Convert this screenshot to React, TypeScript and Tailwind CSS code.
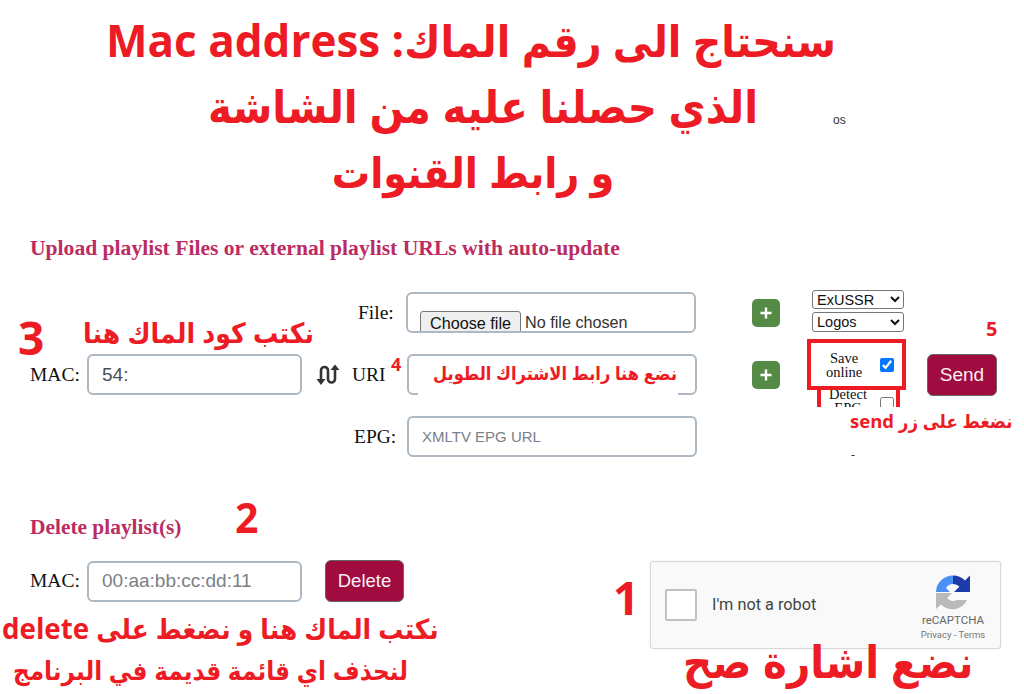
const arabic = { fontFamily: '"Open Sans", "DejaVu Sans Condensed", sans-serif' };

function SwapIcon() {
  return (
    <svg width="24" height="22" viewBox="0 0 24 22" className="shrink-0">
      <path d="M5 16V6.5a3.5 3.5 0 0 1 7 0V15a3.5 3.5 0 0 0 7 0V5" fill="none" stroke="#333" strokeWidth="2.6" />
      <path d="M0.5 15h9L5 21zM14.500 6h9L19 0.500z" fill="#333" />
    </svg>
  );
}

function PlusButton() {
  return (
    <button className="flex h-[28px] w-[28px] items-center justify-center rounded-[5px] bg-[#558b47]">
      <svg width="14" height="14" viewBox="0 0 14 14">
        <path d="M7 1.500v11M1.500 7h11" stroke="#fff" strokeWidth="2.400" />
      </svg>
    </button>
  );
}

function RecaptchaLogo() {
  return (
    <svg width="36" height="36" viewBox="0 0 36 36">
      <path d="M1 17A17 17 0 0 1 18 0.500V9A9 9 0 0 0 11 13L15 17Z" fill="#4a90f2" />
      <path d="M18 0.500A17 17 0 0 1 30 5.500L35 0.500V17H19L24.500 11.500A9 9 0 0 0 18 9Z" fill="#1c3aa9" />
      <path d="M1 18H17L12 23A8 8 0 0 0 22 25H32A16 16 0 0 1 6 29.500L1 34Z" fill="#b9b9b9" />
    </svg>
  );
}

function Note({ className, children }: { className: string; children: React.ReactNode }) {
  return (
    <div dir="rtl" style={arabic} className={`absolute font-bold whitespace-nowrap text-[#ed1c24] ${className}`}>
      {children}
    </div>
  );
}

export default function App() {
  const inputClass =
    "h-[41px] rounded-[6px] border-2 border-[#adb8c2] bg-white px-[13px] font-['Liberation_Sans',sans-serif] text-[#495057] placeholder:text-[#7a8087] outline-none";

  return (
    <div className="relative h-[694px] w-[1024px] overflow-hidden bg-white font-['Liberation_Serif',serif] text-[19.500px] text-[#111]">
      <div dir="rtl" style={arabic} className="w-[942px] pt-[7px] text-center text-[44px] leading-[66px] font-bold text-[#ed1c24]">
        <div>سنحتاج الى رقم الماك: Mac address</div>
        <div className="pl-[24px] text-[45px]">الذي حصلنا عليه من الشاشة</div>
        <div className="pl-[4px] text-[42.500px]">و رابط القنوات</div>
      </div>

      <h2 className="mt-[31px] pl-[30px] text-[21.600px] leading-[24px] font-bold text-[#bc2c62]">
        Upload playlist Files or external playlist URLs with auto-update
      </h2>

      <form className="mt-[32px] flex h-[168px] items-start pl-[30px]">
        <div className="mt-[62px] flex items-center">
          <label className="w-[57px]">MAC:</label>
          <input className={`${inputClass} w-[215px] text-[19px]`} defaultValue="54:" />
          <span className="ml-[14px]">
            <SwapIcon />
          </span>
        </div>

        <div className="ml-[11px] flex flex-col gap-[21px]">
          <div className="flex items-center">
            <label className="ml-[7px] w-[48px]">File:</label>
            <div className="flex h-[41px] w-[290px] items-start overflow-hidden rounded-[6px] border-2 border-[#adb8c2] bg-white pt-[17px] pl-[12px] font-['Liberation_Sans',sans-serif] text-[16.200px] leading-[22px] text-[#333]">
              <span className="rounded-[3px] border border-[#767676] bg-[#efefef] px-[9px] whitespace-nowrap text-[#111]">Choose file</span>
              <span className="ml-[4px] whitespace-nowrap">No file chosen</span>
            </div>
          </div>
          <div className="flex items-center">
            <label className="w-[56px] pl-[1px]">URI</label>
            <input className={`${inputClass} w-[290px] text-[15px]`} />
          </div>
          <div className="flex items-center">
            <label className="w-[56px] pl-[3px]">EPG:</label>
            <input className={`${inputClass} w-[290px] text-[15px]`} placeholder="XMLTV EPG URL" />
          </div>
        </div>

        <div className="mt-[7px] ml-[55px] flex flex-col gap-[34px]">
          <PlusButton />
          <PlusButton />
        </div>

        <div className="-mt-[2px] ml-[27px] flex flex-col">
          <div className="ml-[5px] flex w-[92px] flex-col gap-[3px] font-['Liberation_Sans',sans-serif] text-[14.500px]">
            <select className="h-[19px] rounded-[3px] border border-[#767676] bg-white leading-[17px]">
              <option>ExUSSR</option>
            </select>
            <select className="h-[20px] rounded-[3px] border border-[#767676] bg-white leading-[18px]">
              <option>Logos</option>
            </select>
          </div>
          <label className="relative z-10 mt-[7px] flex h-[51px] w-[99px] items-center border-[4px] border-[#ed1c24] bg-white pl-[9px] text-[14.500px] leading-[14px]">
            <span className="w-[48px] text-center">
              Save
              <br />
              online
            </span>
            <input type="checkbox" defaultChecked className="ml-[12px] h-[14px] w-[14px]" />
          </label>
          <label className="-mt-[5px] ml-[10px] flex h-[22px] w-[83px] items-start overflow-hidden border-x-[4px] border-[#ed1c24] bg-white pl-[3px] text-[14.500px] leading-[14px]">
            <span className="mt-[2px] w-[48px] text-center">
              Detect
              <br />
              EPG
            </span>
            <input type="checkbox" className="mt-[12px] ml-[8px] h-[14px] w-[14px]" />
          </label>
        </div>

        <button className="mt-[62px] ml-[21px] h-[42px] w-[70px] rounded-[6px] border border-[#666] bg-[#a00b40] font-['Liberation_Sans',sans-serif] text-[19px] text-[#f7f0f3]">
          Send
        </button>
      </form>

      <div className="flex items-start justify-between pr-[23px] pl-[30px]">
        <div>
          <h2 className="mt-[55px] text-[21.400px] leading-[24px] font-bold text-[#bc2c62]">Delete playlist(s)</h2>
          <div className="mt-[21px] flex items-center">
            <label className="w-[57px]">MAC:</label>
            <input className={`${inputClass} w-[215px] text-[19px]`} placeholder="00:aa:bb:cc:dd:11" />
            <button className="ml-[23px] h-[42px] w-[79px] rounded-[6px] border border-[#666] bg-[#a00b40] font-['Liberation_Sans',sans-serif] text-[18.500px] text-[#f7f0f3]">
              Delete
            </button>
          </div>
        </div>

        <div className="relative mt-[101px] h-[88px] w-[351px] rounded-[3px] border border-[#d8d8d8] bg-[#f9f9f9] font-['Roboto',sans-serif] shadow-[0_0_3px_rgba(0,0,0,0.08)]">
          <div className="flex h-full items-center pl-[14px]">
            <div className="h-[32px] w-[32px] rounded-[2px] border-2 border-[#c1c1c1] bg-white" />
            <span className="ml-[15px] text-[16.300px] text-[#444]">I'm not a robot</span>
          </div>
          <div className="absolute top-[13px] right-[14px] flex w-[66px] flex-col items-center">
            <RecaptchaLogo />
            <span className="mt-[3px] text-[11.500px] leading-[13px] whitespace-nowrap text-[#666]">reCAPTCHA</span>
            <span className="mt-[2px] text-[9.500px] leading-[12px] whitespace-nowrap text-[#777]">Privacy - Terms</span>
          </div>
        </div>
      </div>

      <span className="absolute top-[111px] left-[833px] font-['Liberation_Sans',sans-serif] text-[12px] text-[#333]">os</span>
      <span className="absolute top-[446px] left-[851px] text-[12px] text-[#333]">-</span>

      <Note className="top-[310px] left-[83px] text-[28px] leading-[44px]">نكتب كود الماك هنا</Note>
      <Note className="top-[309px] left-[18px] text-[46px] leading-[56px]">3</Note>
      <Note className="top-[353px] left-[391px] text-[18px] leading-[22px]">4</Note>
      <div className="absolute top-[358px] left-[418px] h-[38px] w-[260px] bg-white" />
      <Note className="top-[358px] left-[433px] text-[18.100px] leading-[30px]">نضع هنا رابط الاشتراك الطويل</Note>
      <Note className="top-[317px] left-[986px] text-[20px] leading-[24px]">5</Note>
      <Note className="top-[407px] left-[850px] text-[18.500px] leading-[28px]">نضغط على زر send</Note>
      <Note className="top-[492px] left-[235px] text-[41px] leading-[50px]">2</Note>
      <Note className="top-[606px] left-[2px] text-[27.700px] leading-[44px]">نكتب الماك هنا و نضغط على delete</Note>
      <Note className="top-[650px] left-[13px] text-[25.800px] leading-[40px]">لنحذف اي قائمة قديمة في البرنامج</Note>
      <Note className="top-[569px] left-[613px] text-[46px] leading-[56px]">1</Note>
      <Note className="top-[634px] left-[683px] text-[45px] leading-[54px]">نضع اشارة صح</Note>
    </div>
  );
}
